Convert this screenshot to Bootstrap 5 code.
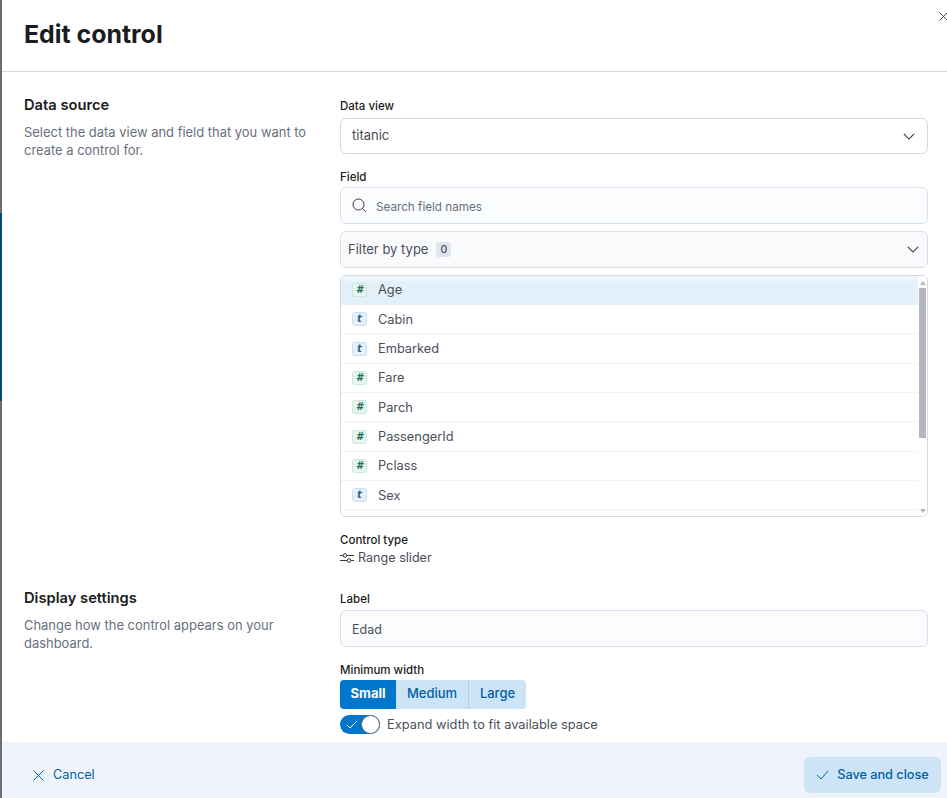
<!DOCTYPE html>
<html lang="en">
<head>
  <meta charset="UTF-8" />
  <meta name="viewport" content="width=device-width, initial-scale=1.0" />
  <title>Edit control</title>
  <link href="https://cdn.jsdelivr.net/npm/bootstrap@5.3.0/dist/css/bootstrap.min.css" rel="stylesheet">
  <style>
    html, body { height: 100%; overflow: hidden; }
    body { font-family: Inter, "Liberation Sans", sans-serif; color: #343741; font-size: 14px; background: #fff; }
    .flyout { height: 798px; }
    .edge-strip { width: 2px; flex: none; background: linear-gradient(to bottom, #6e6e6e 0, #6e6e6e 213px, #0b4a78 213px, #0b4a78 401px, #6e6e6e 401px); }
    .flyout-main { min-width: 0; }
    .flyout-head { height: 72px; border-bottom: 1px solid #d3dae6; padding: 19px 22px 0; }
    .flyout-head h1 { font-size: 24.9px; line-height: 30px; font-weight: 700; color: #1a1c21; margin: 0; }
    .close-x { position: absolute; top: 12px; left: 939px; width: 9px; height: 9px; overflow: visible; }
    .flyout-body { padding: 24px 19px 0 22px; height: 670px; overflow: hidden; }
    .desc-col { width: 316px; flex: none; padding-right: 24px; }
    .desc-col h2 { font-size: 14.7px; line-height: 18px; font-weight: 600; color: #1a1c21; margin: 0 0 9px; }
    .desc-col p { font-size: 12.95px; line-height: 18px; color: #69707d; margin: 0; }
    .field-col { width: 588px; flex: none; }
    .field-top { padding-top: 3px; }
    .flabel { font-size: 11.5px; line-height: 14px; font-weight: 500; color: #1a1c21; margin: 0 0 5px; }
    .flabel-tight { margin-bottom: 3px; }
    .flabel-input { margin-bottom: 4px; }
    .fbox { height: 36px; border: 1px solid #d9dfea; border-radius: 6px; background: #fbfcfd; padding: 0 11px; font-size: 13px; color: #4a4e58; }
    .fbox-select { background: #fff; border-color: #d3d9e8; padding-right: 12px; }
    .fbox-filter { padding: 0 8px 0 7px; margin-top: 7px; height: 37px; background: #f9fafc; }
    .fbox-search { height: 37px; }
    .chev { width: 12px; height: 7px; }
    .ph { color: #69707d; font-size: 11.7px; margin-left: 9px; padding-top: 4px; }
    .zero-pill { background: #e0e5ee; border-radius: 3px; font-size: 10.5px; font-weight: 500; padding: 1px 4px; margin-left: 8px; line-height: 13px; }
    .pick-list { margin-top: 7px; height: 242px; border: 1px solid #d3d9e8; border-radius: 6px; overflow: hidden; }
    .pick-rows { width: 577px; flex: none; }
    .pick-row { height: 29.35px; border-bottom: 1px solid #eef0f5; padding-left: 11px; font-size: 12.8px; color: #4a4e58; }
    .pick-row.on { background: linear-gradient(to bottom, #edf5fb 0, #edf5fb 5px, #e3f0f9 5px); border-bottom: 0; height: 29px; padding-bottom: 2px; }
    .token { width: 15px; height: 14px; border-radius: 3px; border: 1px solid; font: italic 700 10px/12px "DejaVu Sans", sans-serif; text-align: center; margin-right: 11px; flex: none; }
    .token-num { color: #1e6e5a; background: #e8f5f1; border-color: #c9e8de; }
    .token-txt { color: #2a6496; background: #e7f1f9; border-color: #c8deef; }
    .fake-bar { width: 9px; flex: none; margin-left: 1px; background: #fff; }
    .fake-thumb { margin-top: 3px; height: 150px; background: #b3b6bf; width: 7px; }
    .arrow-up, .arrow-down { width: 0; height: 0; border-left: 3px solid transparent; border-right: 3px solid transparent; margin-left: 1px; }
    .arrow-up { border-bottom: 4px solid #b3b6bf; margin-top: 5px; }
    .arrow-down { border-top: 4px solid #b3b6bf; margin-bottom: 3px; }
    .ctype { margin-top: 16px; }
    .ctype .flabel { margin-bottom: 3px; }
    .ctype-val { font-size: 12.6px; line-height: 16px; color: #4a4e58; }
    .ctype-val svg { width: 14px; height: 10px; margin-right: 4px; }
    .display-row { margin-top: 26px; }
    .display-head { margin-top: -3px; }
    .label-input { height: 37px; font-size: 12.5px; padding-top: 3px; }
    .minw { margin-top: 16px; }
    .minw .flabel { margin-bottom: 3px; }
    .size-seg { height: 29px; }
    .seg-btn { height: 29px; font-size: 13px; font-weight: 500; padding: 0 0 2px; border: 0; background: #cce4f5; color: #0061a6; display: flex; align-items: center; justify-content: center; }
    .seg-small { width: 56px; background: #0077cc; color: #fff; font-weight: 700; border-radius: 4px 0 0 4px; }
    .seg-med { width: 73px; border-right: 1px solid #b4cfe3; }
    .seg-large { width: 57px; border-radius: 0 4px 4px 0; }
    .expand-row { margin-top: 6px; font-size: 12.85px; color: #4a4e58; }
    .tgl { width: 40px; height: 19px; border-radius: 10px; background: #0077cc; margin-right: 7px; flex: none; padding: 0 1px 0 6px; }
    .tgl svg { width: 12px; height: 9px; }
    .tgl-knob { width: 19px; height: 19px; border-radius: 50%; background: #fff; border: 1px solid #69707d; margin-left: auto; margin-right: -1px; }
    .flyout-foot { height: 56px; background: #eff3fb; padding: 15px 6px 5px 31px; }
    .foot-cancel { color: #0061a6; font-size: 12.7px; text-decoration: none; height: 36px; }
    .foot-cancel svg { width: 11px; height: 11px; margin-right: 9px; }
    .foot-save { width: 137px; height: 36px; background: #cce4f5; color: #0061a6; border: 0; border-radius: 6px; font-size: 12.7px; font-weight: 500; padding: 0; }
    .foot-save svg { width: 13px; height: 10px; margin-right: 8px; }
  </style>
</head>
<body>
  <div class="flyout d-flex position-relative">
    <div class="edge-strip"></div>
    <div class="flyout-main flex-grow-1 d-flex flex-column">
      <div class="flyout-head">
        <h1>Edit control</h1>
      </div>

      <div class="flyout-body">
        <div class="d-flex">
          <div class="desc-col">
            <h2>Data source</h2>
            <p>Select the data view and field that you want to create a control for.</p>
          </div>
          <div class="field-col field-top">
            <div class="flabel">Data view</div>
            <div class="fbox fbox-select d-flex align-items-center justify-content-between">
              <span>titanic</span>
              <svg class="chev" viewBox="0 0 14 8"><path d="M1 1l6 6 6-6" fill="none" stroke="#343741" stroke-width="1.3"/></svg>
            </div>

            <div class="flabel flabel-tight mt-3">Field</div>
            <div class="fbox fbox-search d-flex align-items-center">
              <svg width="15" height="15" viewBox="0 0 15 15"><circle cx="6.5" cy="6.5" r="5.5" fill="none" stroke="#343741" stroke-width="1"/><path d="M10.5 10.5l3.5 3.5" stroke="#343741" stroke-width="1"/></svg>
              <span class="ph">Search field names</span>
            </div>
            <div class="fbox fbox-filter d-flex align-items-center">
              <span>Filter by type</span>
              <span class="zero-pill">0</span>
              <svg class="chev ms-auto" viewBox="0 0 14 8"><path d="M1 1l6 6 6-6" fill="none" stroke="#343741" stroke-width="1.3"/></svg>
            </div>

            <div class="pick-list d-flex">
              <div class="pick-rows" id="pickRows"></div>
              <div class="fake-bar d-flex flex-column">
                <div class="arrow-up"></div>
                <div class="fake-thumb"></div>
                <div class="arrow-down mt-auto"></div>
              </div>
            </div>

            <div class="ctype">
              <div class="flabel">Control type</div>
              <div class="ctype-val d-flex align-items-center">
                <svg viewBox="0 0 14 10"><path d="M0 2.5h3M7 2.5h7M0 7.5h7M11 7.5h3" stroke="#343741" fill="none"/><circle cx="5" cy="2.5" r="1.8" fill="none" stroke="#343741"/><circle cx="9" cy="7.5" r="1.8" fill="none" stroke="#343741"/></svg>
                <span>Range slider</span>
              </div>
            </div>
          </div>
        </div>

        <div class="d-flex display-row">
          <div class="desc-col display-head">
            <h2>Display settings</h2>
            <p>Change how the control appears on your dashboard.</p>
          </div>
          <div class="field-col">
            <div class="flabel flabel-input">Label</div>
            <div class="fbox label-input d-flex align-items-center">Edad</div>
            <div class="minw">
              <div class="flabel">Minimum width</div>
              <div class="size-seg d-flex">
                <button class="seg-btn seg-small" type="button">Small</button>
                <button class="seg-btn seg-med" type="button">Medium</button>
                <button class="seg-btn seg-large" type="button">Large</button>
              </div>
            </div>
            <div class="expand-row d-flex align-items-center">
              <div class="tgl d-flex align-items-center">
                <svg viewBox="0 0 12 9"><path d="M1 5l3 3 7-7" fill="none" stroke="#fff" stroke-width="1"/></svg>
                <div class="tgl-knob"></div>
              </div>
              <span>Expand width to fit available space</span>
            </div>
          </div>
        </div>
      </div>

      <div class="flyout-foot d-flex justify-content-between align-items-start mt-auto">
        <a class="foot-cancel d-flex align-items-center" href="#">
          <svg viewBox="0 0 11 11"><path d="M.5.5l10 10M10.5.5l-10 10" stroke="#0061a6" fill="none"/></svg>
          Cancel
        </a>
        <button class="foot-save d-flex align-items-center justify-content-center" type="button">
          <svg viewBox="0 0 13 10"><path d="M1 5l4 4 7-8" fill="none" stroke="#0061a6"/></svg>
          Save and close
        </button>
      </div>
    </div>
    <svg class="close-x" viewBox="0 0 10 10"><path d="M.5.5l9 9M9.5.5l-9 9" stroke="#343741" fill="none"/></svg>
  </div>

  <script src="https://cdn.jsdelivr.net/npm/bootstrap@5.3.0/dist/js/bootstrap.bundle.min.js"></script>
  <script>
    const fields = [
      ['Age', '#'], ['Cabin', 't'], ['Embarked', 't'], ['Fare', '#'],
      ['Parch', '#'], ['PassengerId', '#'], ['Pclass', '#'], ['Sex', 't']
    ];
    document.getElementById('pickRows').innerHTML = fields.map((f, i) =>
      `<div class="pick-row d-flex align-items-center ${i === 0 ? 'on' : ''}">
        <span class="token ${f[1] === '#' ? 'token-num' : 'token-txt'}">${f[1]}</span>${f[0]}
      </div>`).join('');
  </script>
</body>
</html>
